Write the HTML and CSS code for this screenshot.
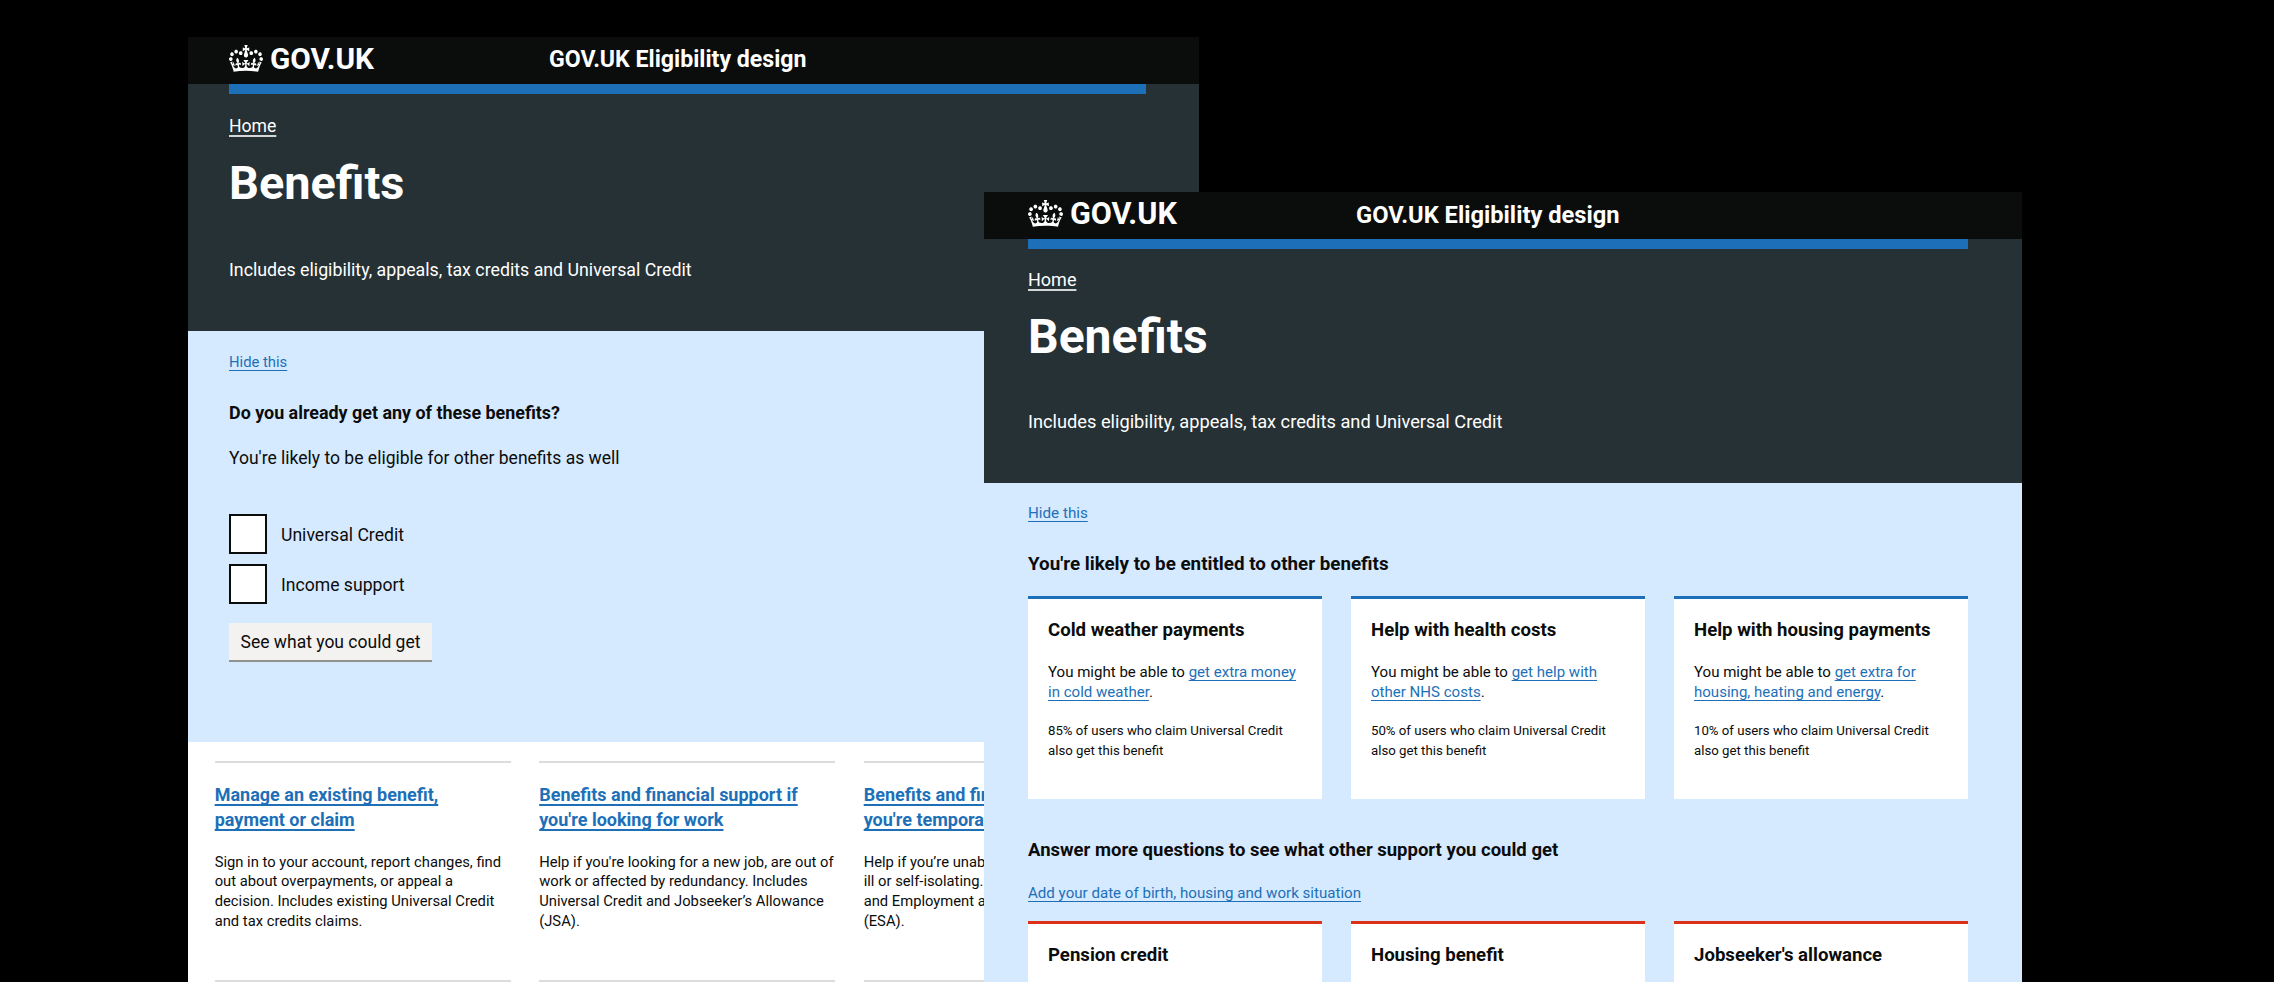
FILE: index.html
```html
<!DOCTYPE html>
<html lang="en">
<head>
<meta charset="utf-8">
<title>Benefits - GOV.UK Eligibility design</title>
<link rel="stylesheet" href="styles.css">
</head>
<body>
<svg class="defs" width="0" height="0" aria-hidden="true">
  <symbol id="crown" viewBox="0 0 132 97" preserveAspectRatio="none">
    <path fill="currentColor" d="M25 30.2c3.5 1.5 7.7-.2 9.1-3.7 1.5-3.6-.2-7.8-3.9-9.2-3.6-1.4-7.6.3-9.1 3.9-1.4 3.5.3 7.5 3.9 9zM9 39.5c3.6 1.5 7.8-.2 9.2-3.7 1.5-3.6-.2-7.8-3.9-9.1-3.6-1.5-7.6.2-9.1 3.8-1.4 3.5.3 7.5 3.8 9zM4.4 57.2c3.5 1.5 7.7-.2 9.1-3.8 1.5-3.6-.2-7.7-3.9-9.1-3.5-1.5-7.6.3-9.1 3.8-1.4 3.5.3 7.6 3.9 9.1zm38.3-21.4c3.5 1.5 7.7-.2 9.1-3.8 1.5-3.6-.2-7.7-3.9-9.1-3.6-1.5-7.6.3-9.1 3.8-1.3 3.6.4 7.7 3.9 9.1zm64.4-5.6c-3.6 1.5-7.8-.2-9.1-3.7-1.5-3.6.2-7.8 3.8-9.2 3.6-1.4 7.7.3 9.2 3.9 1.3 3.5-.4 7.5-3.9 9zm15.9 9.3c-3.6 1.5-7.7-.2-9.1-3.7-1.5-3.6.2-7.8 3.7-9.1 3.6-1.5 7.7.2 9.2 3.8 1.5 3.5-.3 7.5-3.8 9zm4.7 17.7c-3.6 1.5-7.8-.2-9.2-3.8-1.5-3.6.2-7.7 3.9-9.1 3.6-1.5 7.7.3 9.2 3.8 1.3 3.5-.4 7.6-3.9 9.1zM89.3 35.8c-3.6 1.5-7.8-.2-9.2-3.8-1.4-3.6.2-7.7 3.9-9.1 3.6-1.5 7.7.3 9.2 3.8 1.4 3.6-.3 7.7-3.9 9.1zM69.7 17.7l8.9 4.7V9.3l-8.9 2.8c-.2-.3-.5-.6-.9-.9L72.4 0H59.6l3.5 11.2c-.3.3-.6.5-.9.9l-8.8-2.8v13.1l8.8-4.7c.3.3.6.7.9.9l-5 15.4v.1c-.2.8-.4 1.6-.4 2.4 0 4.1 3.1 7.5 7 8.1h.2c.3 0 .7.1 1 .1.4 0 .7 0 1-.1h.2c4-.6 7.1-4.1 7.1-8.1 0-.8-.1-1.7-.4-2.4V34l-5.1-15.4c.4-.2.7-.6 1-.9zM66 92.8c16.9 0 32.8 1.1 47.1 3.2 4-16.9 8.9-26.7 14-33.5l-9.6-3.4c1 4.9 1.1 7.2 0 10.2-1.5-1.4-3-4.3-4.2-8.7L108.6 76c2.8-2 5-3.2 7.5-3.3-4.4 9.4-10 11.9-13.6 11.2-4.3-.8-6.3-4.6-5.6-7.9 1-4.7 5.7-5.9 8-.5 4.3-8.7-3-11.4-7.6-8.8 7.1-7.2 7.9-13.5 2.1-21.1-8 6.1-8.1 12.3-4.5 20.8-4.7-5.4-12.1-2.5-9.5 6.2 3.4-5.2 7.9-2 7.2 3.1-.6 4.3-6.4 7.8-13.5 7.2-10.3-.9-10.9-8-11.2-13.8 2.5-.5 7.1 1.8 11 7.3L80.2 60c-4.1 4.4-8 5.3-12.3 5.4 1.4-4.4 8-11.6 8-11.6H55.5s6.4 7.2 7.9 11.6c-4.2-.1-8-1-12.3-5.4l1.4 16.4c3.9-5.5 8.5-7.7 10.9-7.3-.3 5.8-.9 12.8-11.1 13.8-7.2.6-12.9-2.9-13.5-7.2-.7-5 3.8-8.3 7.1-3.1 2.7-8.7-4.6-11.6-9.4-6.2 3.7-8.5 3.6-14.7-4.6-20.8-5.8 7.6-5 13.9 2.2 21.1-4.7-2.6-11.9.1-7.7 8.8 2.3-5.5 7.1-4.2 8.1.5.7 3.3-1.3 7.1-5.7 7.9-3.5.7-9-1.8-13.5-11.2 2.5.1 4.7 1.3 7.5 3.3l-4.7-15.4c-1.2 4.4-2.7 7.2-4.3 8.7-1.1-3-.9-5.3 0-10.2l-9.5 3.4c5 6.9 9.9 16.7 14 33.5 14.8-2.1 30.8-3.2 47.7-3.2z"/>
  </symbol>
</svg>

<main class="board">
  <section class="screen screen-question">
    <header class="topbar">
      <a class="brand"><svg class="crown"><use href="#crown"/></svg><span class="brand-name">GOV.UK</span></a>
      <span class="service">GOV.UK Eligibility design</span>
    </header>
    <div class="hero">
      <div class="stripe"></div>
      <a class="crumb">Home</a>
      <h1 class="title">Benefits</h1>
      <p class="lead">Includes eligibility, appeals, tax credits and Universal Credit</p>
    </div>
    <div class="panel">
      <a class="hide link">Hide this</a>
      <h2 class="heading">Do you already get any of these benefits?</h2>
      <p class="hint">You're likely to be eligible for other benefits as well</p>
      <div class="options">
        <label class="option"><span class="box"></span><span class="option-text">Universal Credit</span></label>
        <label class="option"><span class="box"></span><span class="option-text">Income support</span></label>
      </div>
      <button class="button">See what you could get</button>
    </div>
    <div class="topics">
      <article class="topic">
        <h3 class="topic-title"><a class="link">Manage an existing benefit,<br>payment or claim</a></h3>
        <p class="topic-text">Sign in to your account, report changes, find<br>out about overpayments, or appeal a<br>decision. Includes existing Universal Credit<br>and tax credits claims.</p>
      </article>
      <article class="topic">
        <h3 class="topic-title"><a class="link">Benefits and financial support if<br>you're looking for work</a></h3>
        <p class="topic-text">Help if you're looking for a new job, are out of<br>work or affected by redundancy. Includes<br>Universal Credit and Jobseeker’s Allowance<br>(JSA).</p>
      </article>
      <article class="topic">
        <h3 class="topic-title"><a class="link">Benefits and fin<br>you're tempora</a></h3>
        <p class="topic-text">Help if you’re unab<br>ill or self-isolating.<br>and Employment a<br>(ESA).</p>
      </article>
      <div class="topic"></div>
      <div class="topic"></div>
      <div class="topic"></div>
    </div>
  </section>

  <section class="screen screen-result">
    <header class="topbar">
      <a class="brand"><svg class="crown"><use href="#crown"/></svg><span class="brand-name">GOV.UK</span></a>
      <span class="service">GOV.UK Eligibility design</span>
    </header>
    <div class="hero">
      <div class="stripe"></div>
      <a class="crumb">Home</a>
      <h1 class="title">Benefits</h1>
      <p class="lead">Includes eligibility, appeals, tax credits and Universal Credit</p>
    </div>
    <div class="panel">
      <a class="hide link">Hide this</a>
      <h2 class="heading">You're likely to be entitled to other benefits</h2>
      <div class="cards">
        <article class="card">
          <h3 class="card-title">Cold weather payments</h3>
          <p class="card-text">You might be able to <a class="link">get extra money<br>in cold weather</a>.</p>
          <p class="card-note">85% of users who claim Universal Credit<br>also get this benefit</p>
        </article>
        <article class="card">
          <h3 class="card-title">Help with health costs</h3>
          <p class="card-text">You might be able to <a class="link">get help with<br>other NHS costs</a>.</p>
          <p class="card-note">50% of users who claim Universal Credit<br>also get this benefit</p>
        </article>
        <article class="card">
          <h3 class="card-title">Help with housing payments</h3>
          <p class="card-text">You might be able to <a class="link">get extra for<br>housing, heating and energy</a>.</p>
          <p class="card-note">10% of users who claim Universal Credit<br>also get this benefit</p>
        </article>
      </div>
      <h2 class="heading heading-more">Answer more questions to see what other support you could get</h2>
      <a class="add link">Add your date of birth, housing and work situation</a>
      <div class="cards cards-more">
        <article class="card card-red"><h3 class="card-title">Pension credit</h3></article>
        <article class="card card-red"><h3 class="card-title">Housing benefit</h3></article>
        <article class="card card-red"><h3 class="card-title">Jobseeker's allowance</h3></article>
      </div>
    </div>
  </section>
</main>
</body>
</html>
```
FILE: styles.css
```css
* { box-sizing: border-box; }

html, body {
  margin: 0;
  height: 100%;
  background: #000;
  overflow: hidden;
}

h1, h2, h3, p { margin: 0; }

.defs { display: block; }

.board {
  position: relative;
  height: 982px;
  overflow: hidden;
  font-family: Roboto, "Liberation Sans", sans-serif;
  color: #0b0c0c;
  white-space: nowrap;
}

/* The two overlapping screens on the board */
.screen { position: absolute; overflow: hidden; bottom: 0; }
.screen-question { left: 188px; top: 37px; width: 1011px; }
.screen-result { left: 984px; top: 192px; width: 1038px; }

/* Header bar */
.topbar {
  display: flex;
  align-items: center;
  height: 47px;
  padding-left: 41px;
  background: #0b0c0c;
  color: #fff;
  font-weight: 700;
}
.brand { display: flex; align-items: center; gap: 7px; width: 320px; }
.crown { display: block; width: 34px; height: 27px; margin-top: -5px; }
.brand-name { font-size: 29.8px; line-height: 36px; margin-top: -3px; }
.service { font-size: 23.15px; line-height: 30px; margin-top: -2px; }

/* Dark hero */
.hero {
  display: flex;
  flex-direction: column;
  align-items: flex-start;
  height: 247px;
  padding: 0 53px 0 41px;
  background: #263135;
  color: #fff;
}
.stripe { width: 100%; height: 10px; background: #1d70b8; }
.crumb {
  margin-top: 20px;
  font-size: 17.6px;
  line-height: 24px;
  text-decoration: underline 2px #d4d6d7;
  text-underline-offset: 3px;
}
.title { margin-top: 17px; font-size: 46.9px; line-height: 56px; }
.lead { margin-top: 47px; font-size: 17.78px; line-height: 24px; }

.link {
  color: #1d70b8;
  text-decoration: underline 1px;
  text-decoration-skip-ink: none;
  text-underline-offset: 3px;
}

/* Light blue panel */
.panel {
  display: flex;
  flex-direction: column;
  align-items: flex-start;
  height: 411px;
  padding: 21px 54px 0 41px;
  background: #d5e9ff;
}
.hide { font-size: 14.8px; line-height: 20px; }
.heading { margin-top: 29px; font-size: 17.9px; line-height: 24px; }
.hint { margin-top: 21px; font-size: 17.53px; line-height: 24px; }
.options { display: flex; flex-direction: column; gap: 10px; margin-top: 44px; }
.option { display: flex; align-items: center; gap: 14px; height: 40px; font-size: 17.6px; line-height: 24px; }
.option-text { padding-top: 1px; }
.box { width: 38px; height: 40px; border: 2px solid #0b0c0c; background: #fff; }
.button {
  margin-top: 19px;
  width: 203px;
  height: 39px;
  padding: 7px 0 6px;
  border: 0;
  border-bottom: 2px solid #929191;
  background: #f3f2f1;
  color: #0b0c0c;
  font: 17.5px/24px Roboto, "Liberation Sans", sans-serif;
}

/* Topic list */
.topics {
  display: grid;
  grid-template-columns: repeat(3, 296px);
  grid-auto-rows: 219px;
  column-gap: 28.5px;
  height: 300px;
  padding: 19px 0 0 26.7px;
  background: #fff;
}
.topic { border-top: 2px solid #dcdcdc; padding-top: 18.5px; }
.topic-title { font-size: 18px; line-height: 25px; }
.topic-title .link { text-decoration-thickness: 1.5px; }
.topic-text { margin-top: 21px; font-size: 14.75px; line-height: 19.8px; }

/* Result screen is drawn slightly larger */
.screen-result .topbar { padding-left: 44px; }
.screen-result .brand { width: 328px; gap: 7px; }
.screen-result .crown { width: 35px; }
.screen-result .brand-name { font-size: 30.6px; }
.screen-result .service { font-size: 23.7px; }
.screen-result .hero { height: 244px; padding: 0 54px 0 44px; }
.screen-result .crumb { margin-top: 19px; font-size: 18px; }
.screen-result .title { margin-top: 17px; font-size: 48px; }
.screen-result .lead { margin-top: 45px; font-size: 18.23px; }
.screen-result .panel { height: 520px; padding: 20px 54px 0 44px; }
.screen-result .hide { font-size: 15.2px; }
.screen-result .heading { font-size: 18.8px; }
.screen-result .heading-more { margin-top: 39px; font-size: 18.5px; }
.add { margin-top: 21px; font-size: 15.1px; line-height: 20px; }

.cards {
  display: grid;
  grid-template-columns: repeat(3, 294px);
  column-gap: 29px;
  margin-top: 20px;
}
.card {
  height: 203px;
  padding: 19px 20px 0;
  border-top: 3px solid #1d70b8;
  background: #fff;
}
.cards-more { margin-top: 18px; }
.card-red { border-top-color: #dc3018; }
.card-title { font-size: 18.6px; line-height: 24px; }
.card-text { margin-top: 21px; font-size: 15.05px; line-height: 19.5px; }
.card-note { margin-top: 19px; font-size: 13.23px; line-height: 19.5px; }
```
